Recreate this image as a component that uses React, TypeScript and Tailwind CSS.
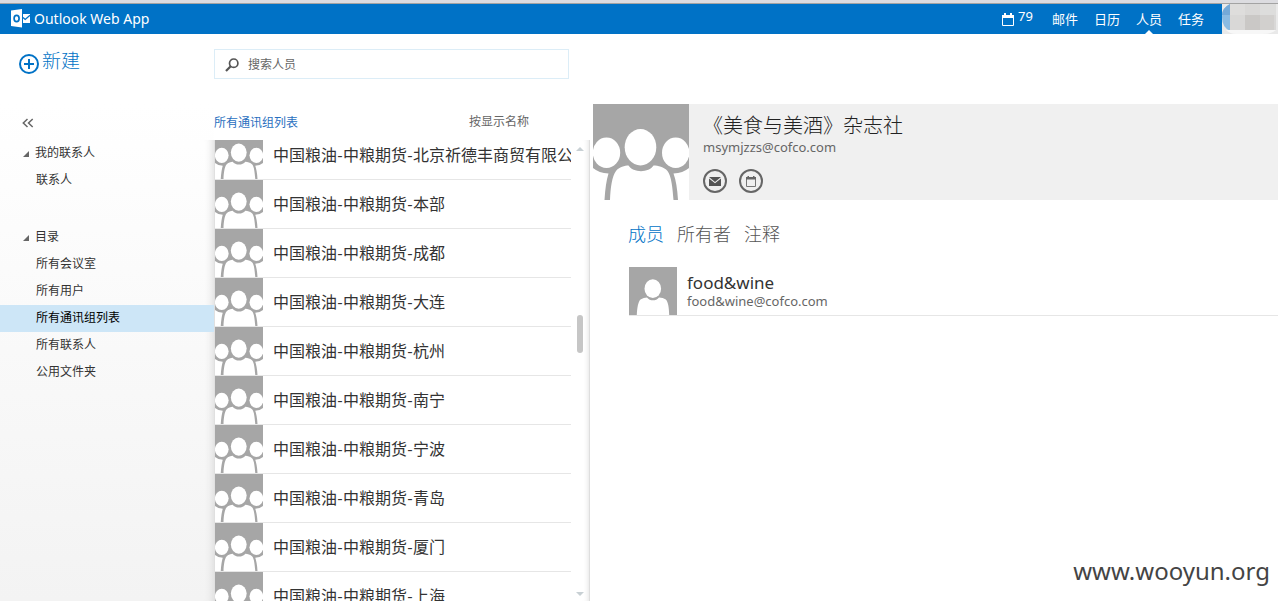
import React from 'react';

const groups = [
  '中国粮油-中粮期货-北京祈德丰商贸有限公司',
  '中国粮油-中粮期货-本部',
  '中国粮油-中粮期货-成都',
  '中国粮油-中粮期货-大连',
  '中国粮油-中粮期货-杭州',
  '中国粮油-中粮期货-南宁',
  '中国粮油-中粮期货-宁波',
  '中国粮油-中粮期货-青岛',
  '中国粮油-中粮期货-厦门',
  '中国粮油-中粮期货-上海',
];

const folders = [
  { title: '我的联系人', items: ['联系人'] },
  { title: '目录', items: ['所有会议室', '所有用户', '所有通讯组列表', '所有联系人', '公用文件夹'] },
];

const selectedFolder = '所有通讯组列表';

function GroupAvatar({ className }: { className: string }) {
  return (
    <svg viewBox="0 0 96 96" className={className} aria-hidden="true">
      <rect width="96" height="96" fill="#a6a6a6" />
      <g fill="#fff">
        <ellipse cx="13.5" cy="48.7" rx="13.7" ry="15.3" />
        <ellipse cx="82.7" cy="48.7" rx="13.7" ry="15.3" />
        <ellipse cx="47.5" cy="43.2" rx="15.8" ry="18.2" />
        <path d="M0 64Q6 69 15.5 69.5Q12.5 79 11.5 96H0Z" />
        <path d="M96 64Q90 69 80.5 69.5Q84 79 85 96H96Z" />
        <path d="M17 96C17.5 84 19 72 23 67C26 63 32 61.5 35.5 61.5C40 69 56 69 60.5 61.5C65 61.5 71 63 74.5 67C78.5 72 79.5 84 80.5 96Z" />
      </g>
    </svg>
  );
}

function PersonAvatar({ className }: { className: string }) {
  return (
    <svg viewBox="0 0 48 48" className={className} aria-hidden="true">
      <rect width="48" height="48" fill="#a6a6a6" />
      <g fill="#fff">
        <ellipse cx="23.8" cy="21.7" rx="8.3" ry="9.4" />
        <path d="M7.800 48C8.200 41 9 35 11.500 32.500C13.500 31 16 30.500 18 30.400C21 34.300 27 34.300 30 30.400C32.500 30.500 35 31 36.800 32.500C39.300 35 40 41 40.200 48Z" />
      </g>
    </svg>
  );
}

function OutlookLogo() {
  return (
    <svg viewBox="0 0 20 20" className="h-5 w-5" aria-hidden="true">
      <path d="M0 1.500L11 0V18.500L0 17Z" fill="#fff" />
      <ellipse cx="5.600" cy="9.500" rx="2.500" ry="3.100" fill="none" stroke="#0072c6" strokeWidth="1.700" />
      <rect x="12" y="5" width="7" height="9" fill="#fff" />
      <path d="M12 8.500L14.200 10.500L19 6.300" fill="none" stroke="#0072c6" strokeWidth="1.300" />
    </svg>
  );
}

function MaskedUser() {
  return (
    <svg viewBox="0 4 56 30" className="h-[30px] w-14 shrink-0" aria-hidden="true">
      <rect y="4" width="56" height="30" fill="#e9e9e9" />
      <path d="M8 4Q0 8 0 17Q0 27 8 31Z" fill="#8bbbe2" />
      <path d="M8 4Q0 8 0 15H8Z" fill="#74a9d8" />
      <path d="M8 4H54V30H8Z" fill="#d9d8d7" />
      <path d="M38 4H54V15H38Z" fill="#dddddc" />
      <rect x="8" y="4" width="15" height="11" fill="#dedddc" />
      <rect x="23" y="15" width="15" height="15" fill="#cac8c6" />
      <rect x="38" y="15" width="14" height="15" fill="#d2d0ce" />
      <path d="M4 30H54Q50 34 40 34H14Q8 34 4 30Z" fill="#f7f7f7" />
    </svg>
  );
}

function Header() {
  return (
    <>
      <div className="h-1 shrink-0 border-b border-[#a3a3a3] bg-[#dcdce0]" />
      <header className="flex h-[30px] shrink-0 items-stretch justify-between bg-[#0072c6] text-white">
        <div className="flex items-center gap-[3px] pl-[11px]">
          <OutlookLogo />
          <h1 className="text-sm">Outlook Web App</h1>
        </div>
        <div className="flex">
          <nav className="flex gap-4 pr-[18px] text-[13px] leading-[30px]">
            <a href="#reminders" aria-label="提醒" className="mr-[3px] flex items-center gap-1">
              <svg viewBox="0 0 12 13" className="h-[13px] w-3" aria-hidden="true">
                <path d="M0.500 2.500H11.500V12.500H0.500Z" fill="none" stroke="#fff" />
                <path d="M0 2H12V5H0ZM2 0H4V3H2ZM8 0H10V3H8Z" fill="#fff" />
              </svg>
              <span className="pb-[6px] leading-6">79</span>
            </a>
            <a href="#mail">邮件</a>
            <a href="#calendar">日历</a>
            <a href="#people" aria-current="page" className="relative">
              人员
              <svg viewBox="0 0 8 4" className="absolute bottom-0 left-[9px] h-1 w-2" aria-hidden="true">
                <path d="M0 4L4 0L8 4Z" fill="#fff" />
              </svg>
            </a>
            <a href="#tasks">任务</a>
          </nav>
          <MaskedUser />
        </div>
      </header>
    </>
  );
}

function Sidebar() {
  return (
    <aside className="flex w-[214px] shrink-0 flex-col">
      <div className="h-[70px] pl-[19px] pt-3">
        <button type="button" className="flex items-center gap-[3px] text-[19px] font-light leading-[30px] text-[#0072c6]">
          <svg viewBox="0 0 20 20" className="mt-[6px] h-5 w-5" fill="none" stroke="currentColor" strokeWidth="2" aria-hidden="true">
            <circle cx="10" cy="10" r="9" />
            <path d="M10 5V15M5 10H15" />
          </svg>
          新建
        </button>
      </div>
      <div className="flex flex-1 flex-col bg-gradient-to-b from-white to-[#f3f3f3] text-xs text-[#333]">
        <button type="button" aria-label="折叠" className="flex h-9 w-12 items-center pl-[22px] pt-[2px] text-[#666]">
          <svg viewBox="0 0 12 10" className="h-[10px] w-3" fill="none" stroke="currentColor" strokeWidth="1.500" aria-hidden="true">
            <path d="M5.500 1L1.300 5L5.500 9M10.700 1L6.500 5L10.700 9" />
          </svg>
        </button>
        <nav className="flex flex-1 flex-col gap-[30px] shadow-[inset_-9px_0_8px_-8px_#d8d8d8]">
          {folders.map((folder) => (
            <section key={folder.title}>
              <h2 className="flex h-[27px] items-center gap-[6px] pb-[2px] pl-[23px]">
                <svg viewBox="0 0 6 6" className="mt-[2px] h-[6px] w-[6px]" aria-hidden="true">
                  <path d="M6 0V6H0Z" fill="#666" />
                </svg>
                {folder.title}
              </h2>
              <ul>
                {folder.items.map((item) => (
                  <li key={item}>
                    <a
                      href="#folder"
                      className={
                        item === selectedFolder
                          ? 'flex h-[27px] items-center bg-[#cde6f7] pb-[2px] pl-9 text-black'
                          : 'flex h-[27px] items-center pb-[2px] pl-9'
                      }
                    >
                      {item}
                    </a>
                  </li>
                ))}
              </ul>
            </section>
          ))}
        </nav>
      </div>
    </aside>
  );
}

function Scrollbar() {
  return (
    <div className="flex w-[6px] shrink-0 flex-col items-center justify-between pb-[5px] pt-[7px]" aria-hidden="true">
      <svg viewBox="0 0 8 4" className="h-1 w-2">
        <path d="M0 4L4 0L8 4Z" fill="#c8d0d4" />
      </svg>
      <div className="flex w-full flex-1 flex-col">
        <div className="grow-[41]" />
        <div className="h-[38px] rounded-full bg-[#c6c6c6]" />
        <div className="grow-[60]" />
      </div>
      <svg viewBox="0 0 8 4" className="h-1 w-2">
        <path d="M0 0L4 4L8 0Z" fill="#c8d0d4" />
      </svg>
    </div>
  );
}

function ContactList() {
  return (
    <section className="flex w-[376px] shrink-0 flex-col">
      <div className="h-[70px] pr-[21px] pt-[15px]">
        <label className="flex h-[30px] items-center gap-[9px] border border-[#dcedf7] pl-[10px] pt-[2px]">
          <svg viewBox="0 0 14 14" className="h-[14px] w-[14px]" fill="none" stroke="#555" aria-hidden="true">
            <circle cx="8.700" cy="5.200" r="4.200" strokeWidth="1.700" />
            <path d="M5.700 8.200L1 13" strokeWidth="2.200" />
          </svg>
          <input
            type="search"
            aria-label="搜索人员"
            placeholder="搜索人员"
            className="min-w-0 flex-1 text-xs outline-none placeholder:text-[#666]"
          />
        </label>
      </div>
      <div className="flex h-9 items-center justify-between pr-[61px] text-xs">
        <h2 className="pt-[2px] text-[#2a6fc0]">所有通讯组列表</h2>
        <button type="button" className="text-[#666]">按显示名称</button>
      </div>
      <div className="flex min-h-0 flex-1 gap-[6px] border-l border-r border-l-[#e0e0e0] border-r-[#dedede] pr-[6px] shadow-[inset_-5px_0_5px_-4px_#e4e4e4]">
        <div className="min-w-0 flex-1 overflow-hidden">
          <ul className="-mt-[9px] font-['Lato','Noto_Sans_CJK_SC',sans-serif]">
            {groups.map((name) => (
              <li key={name} className="flex h-[49px] items-center gap-[10px] overflow-hidden border-b border-[#e6e6e6]">
                <GroupAvatar className="h-12 w-12 shrink-0" />
                <span className="whitespace-nowrap text-base text-[#333]">{name}</span>
              </li>
            ))}
          </ul>
        </div>
        <Scrollbar />
      </div>
    </section>
  );
}

function ContactCard() {
  const action = 'flex h-6 w-6 items-center justify-center rounded-full border-2 border-[#666]';
  return (
    <section className="min-w-0 flex-1 pl-[3px] pt-[70px]">
      <header className="flex h-24 bg-[#f0f0f0]">
        <GroupAvatar className="h-24 w-24 shrink-0" />
        <div className="pl-[14px] pt-[9px]">
          <h2 className="text-xl font-light leading-[26px] text-[#222]">《美食与美酒》杂志社</h2>
          <p className="text-[13px] leading-4 text-[#666]">msymjzzs@cofco.com</p>
          <div className="flex gap-3 pt-[14px]">
            <button type="button" aria-label="发送邮件" className={action}>
              <svg viewBox="0 0 12 9" className="h-[9px] w-3" aria-hidden="true">
                <path d="M0 0H12L6 5Z" fill="#555" />
                <path d="M0 1.500L6 6.300L12 1.500V9H0Z" fill="#555" />
              </svg>
            </button>
            <button type="button" aria-label="安排会议" className={action}>
              <svg viewBox="0 0 10 11" className="h-[11px] w-[10px]" aria-hidden="true">
                <path d="M0.500 2H9.500V10.500H0.500Z" fill="none" stroke="#777" />
                <path d="M0 1H10V3.500H0ZM1.500 0H3V2H1.500ZM7 0H8.500V2H7Z" fill="#666" />
              </svg>
            </button>
          </div>
        </div>
      </header>
      <nav className="flex gap-[13px] pl-[35px] pt-5 text-lg font-light leading-[28px] text-[#555]">
        <button type="button" className="text-[#0072c6]">成员</button>
        <button type="button">所有者</button>
        <button type="button">注释</button>
      </nav>
      <ul className="pl-9 pt-[19px]">
        <li className="flex h-[49px] gap-[10px] border-b border-[#e6e6e6]">
          <PersonAvatar className="h-12 w-12 shrink-0" />
          <div className="pt-[6px]">
            <p className="text-[17px] leading-5 text-[#333]">food&amp;wine</p>
            <p className="text-[13px] leading-4 text-[#666]">food&amp;wine@cofco.com</p>
          </div>
        </li>
      </ul>
    </section>
  );
}

export default function App() {
  return (
    <div className="relative flex h-screen flex-col overflow-hidden bg-white font-['Noto_Sans','Noto_Sans_CJK_SC',sans-serif]">
      <Header />
      <main className="flex min-h-0 flex-1">
        <Sidebar />
        <ContactList />
        <ContactCard />
      </main>
      <p className="absolute bottom-[14px] right-2 text-2xl text-[#444]">www.wooyun.org</p>
    </div>
  );
}
